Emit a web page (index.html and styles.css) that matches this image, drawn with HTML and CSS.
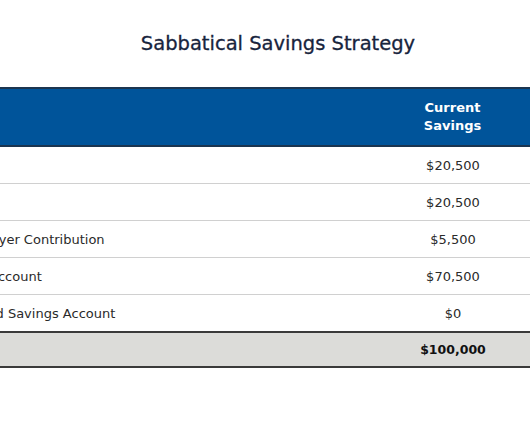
FILE: index.html
```html
<!DOCTYPE html>
<html lang="en">
<head>
<meta charset="utf-8">
<title>Sabbatical Savings Strategy</title>
<link rel="stylesheet" href="styles.css">
</head>
<body>
<div class="wrap">
  <h1 class="title">Sabbatical Savings Strategy</h1>
  <table class="savings">
    <thead>
      <tr>
        <th class="col-name"></th>
        <th class="col-amt">Current<br>Savings</th>
      </tr>
    </thead>
    <tbody>
      <tr><td class="col-name">IRA</td><td class="col-amt">$20,500</td></tr>
      <tr><td class="col-name">401k</td><td class="col-amt">$20,500</td></tr>
      <tr><td class="col-name">Employer Contribution</td><td class="col-amt">$5,500</td></tr>
      <tr><td class="col-name">HSA Account</td><td class="col-amt">$70,500</td></tr>
      <tr><td class="col-name">Shared Savings Account</td><td class="col-amt">$0</td></tr>
    </tbody>
    <tfoot>
      <tr><td class="col-name">Total</td><td class="col-amt">$100,000</td></tr>
    </tfoot>
  </table>
</div>
</body>
</html>
```
FILE: styles.css
```css
html, body {
  margin: 0;
  padding: 0;
  background: #ffffff;
  overflow: hidden;
}
body {
  font-family: "DejaVu Sans", sans-serif;
  color: #2a2a2a;
}
.wrap {
  margin-left: -54px;
  width: 660px;
}
.title {
  margin: 0;
  padding: 33px 0 0 4px;
  height: 55px;
  box-sizing: border-box;
  text-align: center;
  font-size: 19.5px;
  font-weight: normal;
  color: #17243d;
  line-height: 22px;
  -webkit-text-stroke: 0.3px #17243d;
}
.savings {
  width: 100%;
  border-collapse: separate;
  border-spacing: 0;
  font-size: 13px;
  margin-top: 32px;
}
.savings thead th {
  background: #00549a;
  color: #ffffff;
  font-weight: bold;
  height: 56px;
  line-height: 18px;
  border-top: 2px solid #1b3550;
  border-bottom: 2px solid #1b3550;
  padding: 0;
}
.col-name {
  text-align: left;
  padding-left: 12px;
}
.savings .col-amt {
  width: 150px;
  padding-right: 78px;
  text-align: center;
}
.savings tbody td {
  height: 36px;
  padding-top: 0;
  padding-bottom: 0;
  border-bottom: 1px solid #d0d0d0;
}
.savings tbody tr:last-child td {
  border-bottom: none;
}
.savings tfoot td {
  background: #dcdcd9;
  font-weight: bold;
  font-size: 12.5px;
  height: 33px;
  padding-top: 0;
  padding-bottom: 0;
  border-top: 2px solid #3a3a3a;
  border-bottom: 2px solid #3a3a3a;
  color: #111111;
}
```
